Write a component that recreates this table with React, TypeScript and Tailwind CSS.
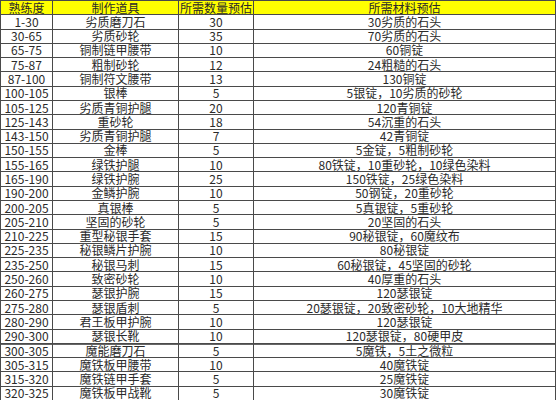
import React from 'react';

// 熟练度 / 制作道具 / 所需数量 / 所需材料
const rows: [string, string, string, string][] = [
  ['1-30', '劣质磨刀石', '30', '30劣质的石头'],
  ['30-65', '劣质砂轮', '35', '70劣质的石头'],
  ['65-75', '铜制链甲腰带', '10', '60铜锭'],
  ['75-87', '粗制砂轮', '12', '24粗糙的石头'],
  ['87-100', '铜制符文腰带', '13', '130铜锭'],
  ['100-105', '银棒', '5', '5银锭，10劣质的砂轮'],
  ['105-125', '劣质青铜护腿', '20', '120青铜锭'],
  ['125-143', '重砂轮', '18', '54沉重的石头'],
  ['143-150', '劣质青铜护腿', '7', '42青铜锭'],
  ['150-155', '金棒', '5', '5金锭，5粗制砂轮'],
  ['155-165', '绿铁护腿', '10', '80铁锭，10重砂轮，10绿色染料'],
  ['165-190', '绿铁护腕', '25', '150铁锭，25绿色染料'],
  ['190-200', '金鳞护腕', '10', '50钢锭，20重砂轮'],
  ['200-205', '真银棒', '5', '5真银锭，5重砂轮'],
  ['205-210', '坚固的砂轮', '5', '20坚固的石头'],
  ['210-225', '重型秘银手套', '15', '90秘银锭，60魔纹布'],
  ['225-235', '秘银鳞片护腕', '10', '80秘银锭'],
  ['235-250', '秘银马刺', '15', '60秘银锭，45坚固的砂轮'],
  ['250-260', '致密砂轮', '10', '40厚重的石头'],
  ['260-275', '瑟银护腕', '15', '120瑟银锭'],
  ['275-280', '瑟银盾刺', '5', '20瑟银锭，20致密砂轮，10大地精华'],
  ['280-290', '君王板甲护腕', '10', '120瑟银锭'],
  ['290-300', '瑟银长靴', '10', '120瑟银锭，80硬甲皮'],
  ['300-305', '魔能磨刀石', '5', '5魔铁，5土之微粒'],
  ['305-315', '魔铁板甲腰带', '10', '40魔铁锭'],
  ['315-320', '魔铁链甲手套', '5', '25魔铁锭'],
  ['320-325', '魔铁板甲战靴', '5', '30魔铁锭'],
];

const headers = ['熟练度', '制作道具', '所需数量预估', '所需材料预估'];

export default function App() {
  return (
    <div className="w-[558px] h-[400px] bg-white overflow-hidden">
      <div
        className="w-[556px] h-[401px] grid grid-cols-[51px_125px_74px_301px] grid-rows-[repeat(28,1fr)] gap-px p-px bg-[#4a4a4a] text-[12px] leading-[12px] text-[#2a2a2a]"
        style={{ fontFamily: '"Noto Sans CJK SC", "Noto Sans", sans-serif' }}
      >
        {headers.map((h) => (
          <div key={h} className="bg-[#ffff00] flex items-center justify-center">
            {h}
          </div>
        ))}
        {rows.map((r, i) =>
          r.map((cell, j) => (
            <div
              key={i + '-' + j}
              className={
                i === 23
                  ? 'bg-white flex items-center justify-center whitespace-nowrap border-t border-[#666]'
                  : 'bg-white flex items-center justify-center whitespace-nowrap'
              }
            >
              {cell}
            </div>
          ))
        )}
      </div>
    </div>
  );
}
